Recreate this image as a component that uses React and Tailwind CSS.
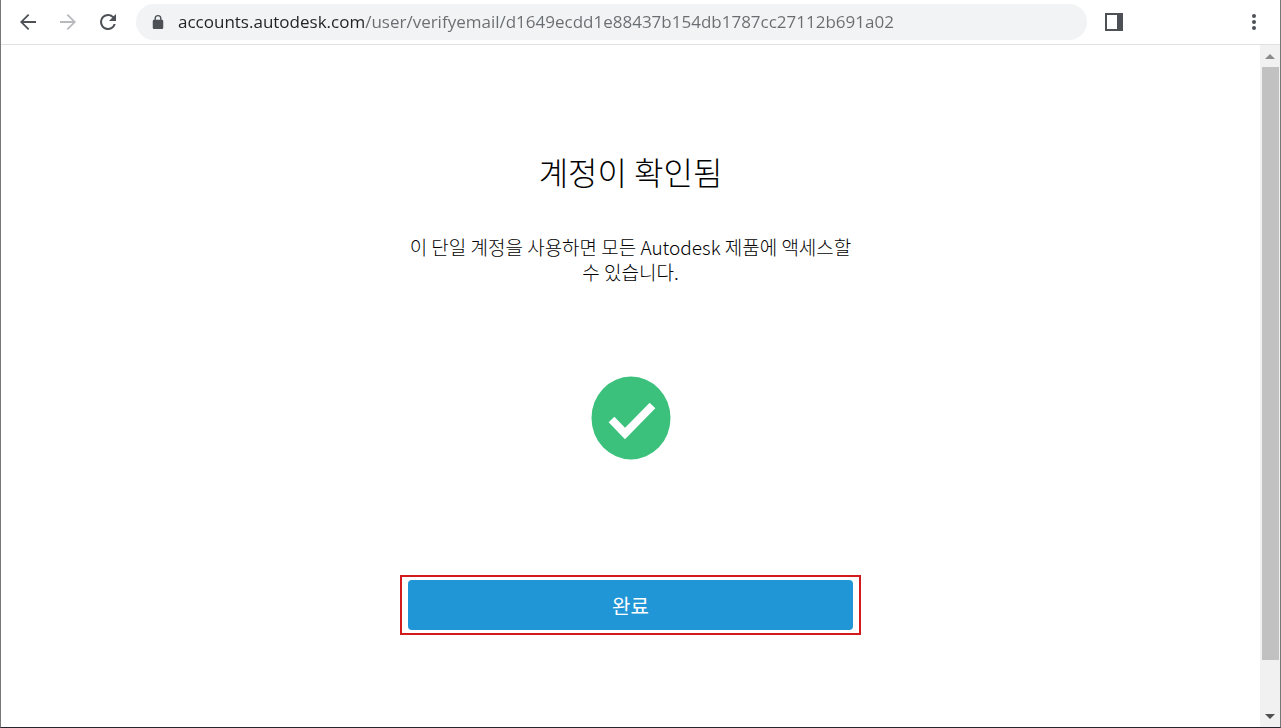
import React, { useState } from "react";

const PAGE_URL =
  "accounts.autodesk.com/user/verifyemail/d1649ecdd1e88437b154db1787cc27112b691a02";

function Toolbar() {
  const [url, setUrl] = useState(PAGE_URL);

  return (
    <header className="flex h-[45px] shrink-0 items-center border-b border-[#dfe1e3] pl-[15px] pr-[14px]">
      {/* Navigation */}
      <nav className="flex items-center gap-4">
        <button type="button" aria-label="Back" className="text-[#4d5156]">
          <svg viewBox="0 0 24 24" className="size-6" fill="currentColor">
            <path d="M20 11.1H7.5l5.8-5.8L12 4l-8 8 8 8 1.3-1.3-5.8-5.8H20z" />
          </svg>
        </button>
        <button type="button" aria-label="Forward" className="text-[#b8babd]">
          <svg viewBox="0 0 24 24" className="size-6" fill="currentColor">
            <path d="M4 11.1h12.5l-5.8-5.8L12 4l8 8-8 8-1.3-1.3 5.8-5.8H4z" />
          </svg>
        </button>
        <button type="button" aria-label="Reload" className="text-[#4d5156]">
          <svg viewBox="0 0 24 24" className="size-6" fill="currentColor">
            <path d="M17.65 6.35A7.96 7.96 0 0 0 12 4a8 8 0 1 0 7.73 10h-2.08A6 6 0 1 1 12 6c1.66 0 3.14.69 4.22 1.78L13 11h7V4z" />
          </svg>
        </button>
      </nav>

      {/* Address bar */}
      <form
        onSubmit={(e) => e.preventDefault()}
        className="ml-4 flex h-9 min-w-0 flex-1 items-center gap-[14px] rounded-full bg-[#f1f3f4] pl-4 pr-4"
      >
        <svg viewBox="0 0 12 16" className="h-[14px] w-3 shrink-0" fill="#4d5156">
          <path
            fillRule="evenodd"
            d="M6 0a4 4 0 0 0-4 4v1.500H1.500A1.500 1.500 0 0 0 0 7v7.500A1.500 1.500 0 0 0 1.500 16h9a1.500 1.500 0 0 0 1.500-1.500V7a1.500 1.500 0 0 0-1.500-1.500H10V4a4 4 0 0 0-4-4zm0 1.500A2.400 2.400 0 0 1 8.400 4v1.500H3.600V4A2.400 2.400 0 0 1 6 1.500z"
          />
        </svg>
        {/* Host is darker than the path */}
        <input
          type="text"
          aria-label="Address"
          value={url}
          onChange={(e) => setUrl(e.target.value)}
          className="min-w-0 flex-1 bg-[linear-gradient(90deg,#202124_187px,#696d71_187px)] bg-clip-text font-['Open_Sans','Noto_Sans',sans-serif] text-[17px] leading-6 text-transparent caret-black outline-none"
        />
      </form>

      <button type="button" aria-label="Side panel" className="ml-[18px]">
        <svg viewBox="0 0 18 18" className="size-[18px]">
          <path fill="#4d5156" d="M0 0h18v18H0z" />
          <path fill="#fff" d="M2 2h10v14H2z" />
        </svg>
      </button>
      <button type="button" aria-label="Menu" className="ml-[119px]">
        <svg viewBox="0 0 24 24" className="size-6" fill="#4d5156">
          <circle cx="12" cy="6" r="2" />
          <circle cx="12" cy="12" r="2" />
          <circle cx="12" cy="18" r="2" />
        </svg>
      </button>
    </header>
  );
}

function Scrollbar() {
  return (
    <div className="flex w-5 shrink-0 flex-col bg-[#f1f1f1]">
      <button type="button" aria-label="Scroll up" className="flex h-[22px] items-center justify-center">
        <svg viewBox="0 0 10 5" className="h-[5px] w-[10px]" fill="#8b8b8b">
          <path d="M5 0l5 5H0z" />
        </svg>
      </button>
      <div className="min-h-0 flex-1 pl-[2px] pr-px">
        <div className="h-[93%] bg-[#c1c1c1]"></div>
      </div>
      <button type="button" aria-label="Scroll down" className="flex h-[22px] items-center justify-center">
        <svg viewBox="0 0 10 5" className="h-[5px] w-[10px]" fill="#505050">
          <path d="M0 0h10L5 5z" />
        </svg>
      </button>
    </div>
  );
}

export default function App() {
  return (
    <div className="flex h-screen flex-col border-x border-b border-x-[#77787a] border-b-[#252530] bg-white">
      <Toolbar />

      <div className="flex min-h-0 flex-1">
        <main className="flex min-w-0 flex-1 flex-col items-center overflow-hidden px-4 pt-[102px] font-['Noto_Sans_CJK_KR',sans-serif] text-black">
          <h1 className="text-[32px] font-light leading-[48px]">계정이 확인됨</h1>
          <p className="mt-[39px] w-full max-w-[445px] text-center text-[19px] font-light leading-[25px]">
            이 단일 계정을 사용하면 모든 Autodesk 제품에 액세스할 수 있습니다.
          </p>

          {/* Success mark */}
          <svg viewBox="0 0 80 84" className="mt-[92px] h-[84px] w-20 shrink-0">
            <ellipse cx="40" cy="42" rx="39.500" ry="41.500" fill="#3bc17c" />
            <path
              d="M20.500 43.500L34 57.500L61.500 29.500"
              fill="none"
              stroke="#fff"
              strokeWidth="8"
            />
          </svg>

          {/* Highlighted action */}
          <div className="mt-[115px] w-full max-w-[461px] border-2 border-[#d31a1c] px-[6px] py-[3px]">
            <button
              type="button"
              className="h-[50px] w-full rounded bg-[#2196d6] pt-[2px] text-[20px] leading-6 text-white"
            >
              완료
            </button>
          </div>
        </main>
        <Scrollbar />
      </div>
    </div>
  );
}
